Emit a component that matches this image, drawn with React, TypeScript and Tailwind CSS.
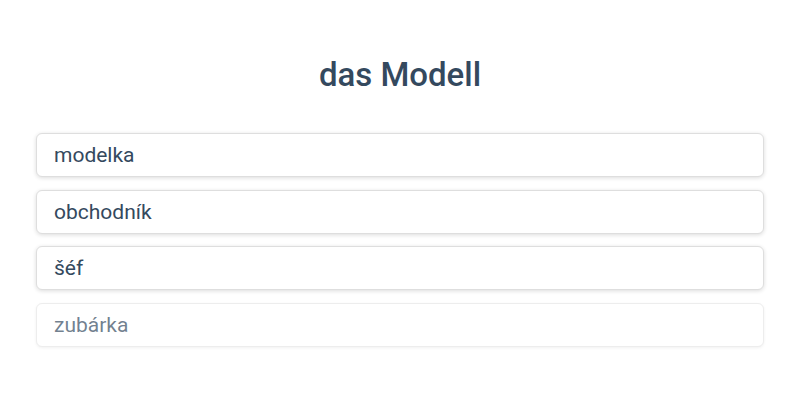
const options = ["modelka", "obchodník", "šéf", "zubárka"];

export default function App() {
  return (
    <div className="min-h-[400px] w-[800px] bg-white px-9 pt-[51px] font-['Roboto',sans-serif] text-[#34495e]">
      <h1 className="text-center text-[33px] font-medium leading-[48px]">das Modell</h1>
      <div className="mt-[34px] flex flex-col gap-[12.6px]">
        {options.map((option, i) => (
          <div
            key={option}
            className={
              i === options.length - 1
                ? "flex h-11 items-center rounded-md border border-[#ededed] bg-white px-[17px] pt-[2px] text-[21px] text-[#34495e]/70 shadow-[0_1px_3px_rgba(0,0,0,0.06)]"
                : "flex h-11 items-center rounded-md border border-[#dedede] bg-white px-[17px] pt-[2px] text-[21px] shadow-[0_1px_4px_rgba(0,0,0,0.14)]"
            }
          >
            {option}
          </div>
        ))}
      </div>
    </div>
  );
}
